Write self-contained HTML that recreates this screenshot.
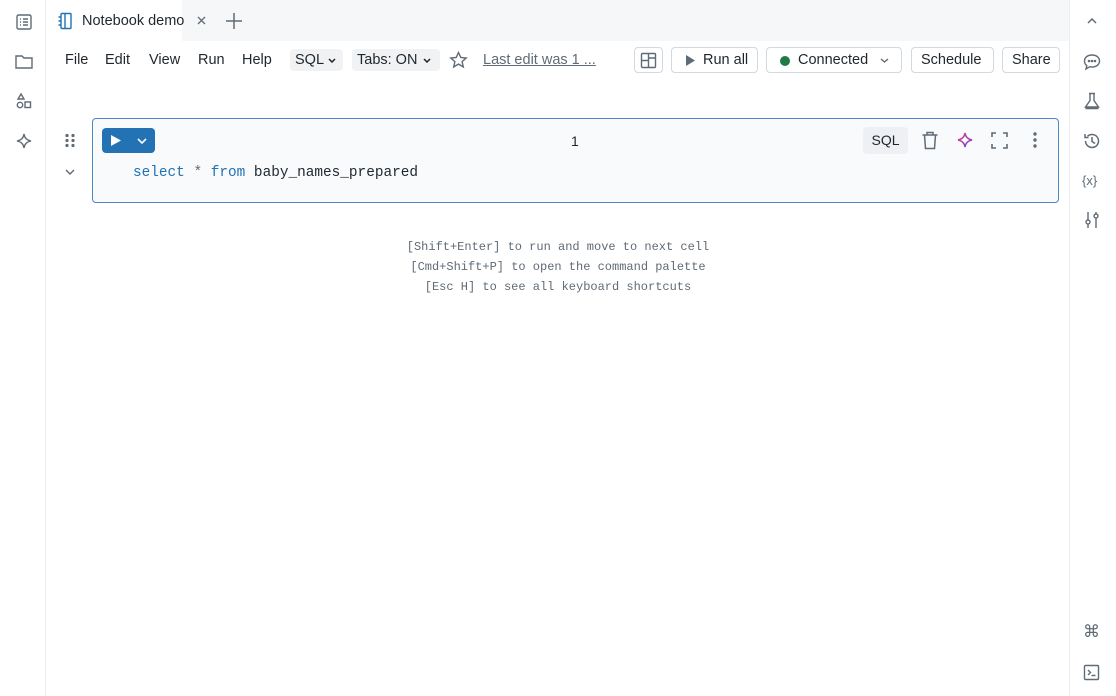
<!DOCTYPE html>
<html><head><style>
*{box-sizing:border-box;margin:0;padding:0}
body{width:1116px;height:696px;background:#fff;font-family:"Liberation Sans",sans-serif;color:#1f272d;position:relative;overflow:hidden;white-space:nowrap}
.abs{position:absolute}
.lsb{left:0;top:0;width:46px;height:696px;background:#fff;border-right:1px solid #ebedf0}
.rsb{left:1069px;top:0;width:47px;height:696px;background:#fff;border-left:1px solid #ebedf0}
.tabbar{left:46px;top:0;width:1023px;height:41px;background:#f6f7f9}
.tab{left:46px;top:0;width:136px;height:41px;background:#fff}
.menu{top:52px;font-size:14.5px;color:#1f272d}
.pill{top:49px;height:22px;background:#f0f2f4;border-radius:4px;font-size:14.5px;padding:3px 5px}
.btn{top:47px;height:26px;border:1px solid #d1d9e1;border-radius:4px;background:#fff;font-size:14.5px;padding:4px 9px;white-space:nowrap}
.cell{left:92px;top:118px;width:967px;height:85px;border:1px solid #4d86c8;border-radius:4px;background:#f8fafc}
.mono{font-family:"Liberation Mono",monospace}
svg{position:absolute}
</style></head><body>
<div class="abs lsb"></div>
<div class="abs rsb"></div>
<div class="abs tabbar"></div>
<div class="abs tab"></div>
<svg style="left:15px;top:13px" width="18" height="18" viewBox="0 0 18 18" fill="none" stroke="#5f6b76" stroke-width="1.4"><rect x="2" y="2" width="14" height="14" rx="1.5"/><path d="M5 6h1M8 6h5M5 9h1M8 9h5M5 12h1M8 12h5"/></svg>
<svg style="left:14px;top:53px" width="20" height="18" viewBox="0 0 20 18" fill="none" stroke="#5f6b76" stroke-width="1.4"><path d="M2 3h6l2 2h8v10H2z"/></svg>
<svg style="left:15px;top:92px" width="18" height="18" viewBox="0 0 18 18" fill="none" stroke="#5f6b76" stroke-width="1.4"><path d="M6 2l3 5H3z"/><circle cx="5" cy="13" r="2.7"/><rect x="10" y="10" width="5.5" height="5.5"/></svg>
<svg style="left:15px;top:132px" width="18" height="18" viewBox="0 0 18 18" fill="none" stroke="#5f6b76" stroke-width="1.4"><path d="M9 2c.6 4 2.5 6 7 7-4.5 1-6.4 3-7 7-.6-4-2.5-6-7-7 4.5-1 6.4-3 7-7z"/></svg>
<svg style="left:57px;top:12px" width="16" height="18" viewBox="0 0 16 18" fill="none" stroke="#2272b4" stroke-width="1.4"><rect x="4" y="1.5" width="10" height="15" rx="1"/><path d="M8 1.5v15M1.5 5h3M1.5 9h3M1.5 13h3"/></svg>
<div class="abs" style="left:82px;top:13px;font-size:14.5px">Notebook demo</div>
<svg style="left:197px;top:16px" width="9" height="9" viewBox="0 0 9 9" stroke="#5f6b76" stroke-width="1.3"><path d="M1 1l7 7M8 1L1 8"/></svg>
<svg style="left:226px;top:13px" width="16" height="16" viewBox="0 0 16 16" stroke="#5f6b76" stroke-width="1.5"><path d="M8 0v16M0 8h16"/></svg>
<div class="abs menu" style="left:65px">File</div>
<div class="abs menu" style="left:105px">Edit</div>
<div class="abs menu" style="left:149px">View</div>
<div class="abs menu" style="left:198px">Run</div>
<div class="abs menu" style="left:242px">Help</div>
<div class="abs pill" style="left:290px;width:53px">SQL<svg style="left:38px;top:9px" width="8" height="5" viewBox="0 0 8 5" fill="none" stroke="#1f272d" stroke-width="1.5"><path d="M1 1l3 3 3-3"/></svg></div>
<div class="abs pill" style="left:352px;width:88px">Tabs: ON<svg style="left:71px;top:9px" width="8" height="5" viewBox="0 0 8 5" fill="none" stroke="#1f272d" stroke-width="1.5"><path d="M1 1l3 3 3-3"/></svg></div>
<svg style="left:449px;top:51px" width="19" height="18" viewBox="0 0 19 18" fill="none" stroke="#5f6b76" stroke-width="1.4"><path d="M9.5 1.5l2.3 5 5.4.5-4.1 3.6 1.2 5.3-4.8-2.8-4.8 2.8 1.2-5.3L1.8 7l5.4-.5z"/></svg>
<div class="abs" style="left:483px;top:52px;font-size:14.5px;color:#5f6b76;text-decoration:underline">Last edit was 1 ...</div>
<div class="abs btn" style="left:634px;width:29px;padding:0"><svg style="left:5px;top:4px" width="17" height="17" viewBox="0 0 17 17" fill="none" stroke="#5f6b76" stroke-width="1.4"><rect x="1.5" y="1.5" width="14" height="14" rx="1"/><path d="M8.5 1.5v14M1.5 8.5h7M8.5 6h7"/></svg></div>
<div class="abs btn" style="left:671px;width:87px;padding-left:31px">Run all<svg style="left:13px;top:7px" width="10" height="11" viewBox="0 0 10 11"><path d="M1 0l9 5.5L1 11z" fill="#5f6b76"/></svg></div>
<div class="abs btn" style="left:766px;width:136px;padding-left:31px">Connected<svg style="left:113px;top:10px" width="9" height="5" viewBox="0 0 9 5" fill="none" stroke="#5f6b76" stroke-width="1.4"><path d="M1 1l3.5 3L8 1"/></svg><span class="abs" style="left:13px;top:8px;width:10px;height:10px;border-radius:50%;background:#1f7a45"></span></div>
<div class="abs btn" style="left:911px;width:83px">Schedule</div>
<div class="abs btn" style="left:1002px;width:58px">Share</div>
<svg style="left:64px;top:133px" width="12" height="15" viewBox="0 0 12 15" fill="#5f6b76"><circle cx="3" cy="2.5" r="1.6"/><circle cx="9" cy="2.5" r="1.6"/><circle cx="3" cy="7.5" r="1.6"/><circle cx="9" cy="7.5" r="1.6"/><circle cx="3" cy="12.5" r="1.6"/><circle cx="9" cy="12.5" r="1.6"/></svg>
<svg style="left:65px;top:169px" width="10" height="6" viewBox="0 0 10 6" fill="none" stroke="#5f6b76" stroke-width="1.4"><path d="M1 1l4 4 4-4"/></svg>
<div class="abs cell"></div>
<div class="abs" style="left:102px;top:128px;width:53px;height:25px;background:#2272b4;border-radius:4px"><svg style="left:9px;top:7px" width="10" height="11" viewBox="0 0 10 11"><path d="M0 0l10 5.5L0 11z" fill="#fff"/></svg><svg style="left:35px;top:10px" width="10" height="6" viewBox="0 0 10 6" fill="none" stroke="#fff" stroke-width="1.6"><path d="M1 1l4 4 4-4"/></svg></div>
<div class="abs" style="left:571px;top:133px;font-size:14px">1</div>
<div class="abs mono" style="left:133px;top:165px;font-size:14.4px;color:#1f272d"><span style="color:#2272b4">select</span> <span style="color:#5f6b76">*</span> <span style="color:#2272b4">from</span> baby_names_prepared</div>
<div class="abs" style="left:863px;top:127px;width:45px;height:27px;background:#eef0f3;border-radius:4px;font-size:14px;text-align:center;line-height:27px">SQL</div>
<svg style="left:921px;top:131px" width="18" height="19" viewBox="0 0 18 19" fill="none" stroke="#5f6b76" stroke-width="1.5"><path d="M1.5 4h15M6 4V1.5h6V4M3.5 4l1 13.5h9l1-13.5"/></svg>
<svg style="left:956px;top:131px" width="18" height="18" viewBox="0 0 18 18" fill="none" stroke-width="1.6"><defs><linearGradient id="g" x1="0" y1="0" x2="1" y2="1"><stop offset="0" stop-color="#e8377a"/><stop offset="1" stop-color="#6b4be0"/></linearGradient></defs><path d="M9 2c.6 4 2.5 6 7 7-4.5 1-6.4 3-7 7-.6-4-2.5-6-7-7 4.5-1 6.4-3 7-7z" stroke="url(#g)"/></svg>
<svg style="left:991px;top:132px" width="17" height="17" viewBox="0 0 17 17" fill="none" stroke="#5f6b76" stroke-width="1.6"><path d="M1 5V1h4M12 1h4v4M16 12v4h-4M5 16H1v-4"/></svg>
<svg style="left:1032px;top:132px" width="6" height="16" viewBox="0 0 6 16" fill="#5f6b76"><circle cx="3" cy="2" r="1.7"/><circle cx="3" cy="8" r="1.7"/><circle cx="3" cy="14" r="1.7"/></svg>
<div class="abs mono" style="left:358px;top:237px;width:400px;text-align:center;font-size:12px;line-height:20px;color:#5f6b76">[Shift+Enter] to run and move to next cell<br>[Cmd+Shift+P] to open the command palette<br>[Esc H] to see all keyboard shortcuts</div>
<svg style="left:1087px;top:18px" width="10" height="7" viewBox="0 0 10 7" fill="none" stroke="#5f6b76" stroke-width="1.5"><path d="M1 5l4-4 4 4"/></svg>
<svg style="left:1083px;top:53px" width="18" height="18" viewBox="0 0 18 18" fill="none" stroke="#5f6b76" stroke-width="1.4"><path d="M9 2c4.4 0 7.5 2.6 7.5 6S13.4 14 9 14c-.8 0-1.5-.1-2.2-.3L3 16l.8-3.3C2.4 11.6 1.5 10 1.5 8 1.5 4.6 4.6 2 9 2z"/><circle cx="6" cy="8" r=".6" fill="#5f6b76"/><circle cx="9" cy="8" r=".6" fill="#5f6b76"/><circle cx="12" cy="8" r=".6" fill="#5f6b76"/></svg>
<svg style="left:1083px;top:92px" width="18" height="18" viewBox="0 0 18 18" fill="none" stroke="#5f6b76" stroke-width="1.4"><path d="M6 1.5h6M7 1.5v7L2.5 15h13L11 8.5v-7M2.5 16.5h13"/></svg>
<svg style="left:1083px;top:132px" width="18" height="18" viewBox="0 0 18 18" fill="none" stroke="#5f6b76" stroke-width="1.5"><path d="M2.5 9A6.5 6.5 0 1 0 4.5 4.3M2 2v3.5h3.5M9 5v4.5l3 2"/></svg>
<div class="abs" style="left:1082px;top:173px;font-size:13px;color:#5f6b76">{x}</div>
<svg style="left:1084px;top:211px" width="16" height="18" viewBox="0 0 16 18" fill="none" stroke="#5f6b76" stroke-width="1.4"><path d="M4 1v8M4 13v4M12 1v2M12 7v10"/><circle cx="4" cy="11" r="2"/><circle cx="12" cy="5" r="2"/></svg>
<div class="abs" style="left:1083px;top:622px;font-size:17px;color:#5f6b76">⌘</div>
<svg style="left:1083px;top:664px" width="17" height="17" viewBox="0 0 17 17" fill="none" stroke="#5f6b76" stroke-width="1.4"><rect x="1.5" y="1.5" width="14" height="14" rx="1"/><path d="M5 6l2.5 2.5L5 11M8.5 11.5h4"/></svg>
</body></html>
